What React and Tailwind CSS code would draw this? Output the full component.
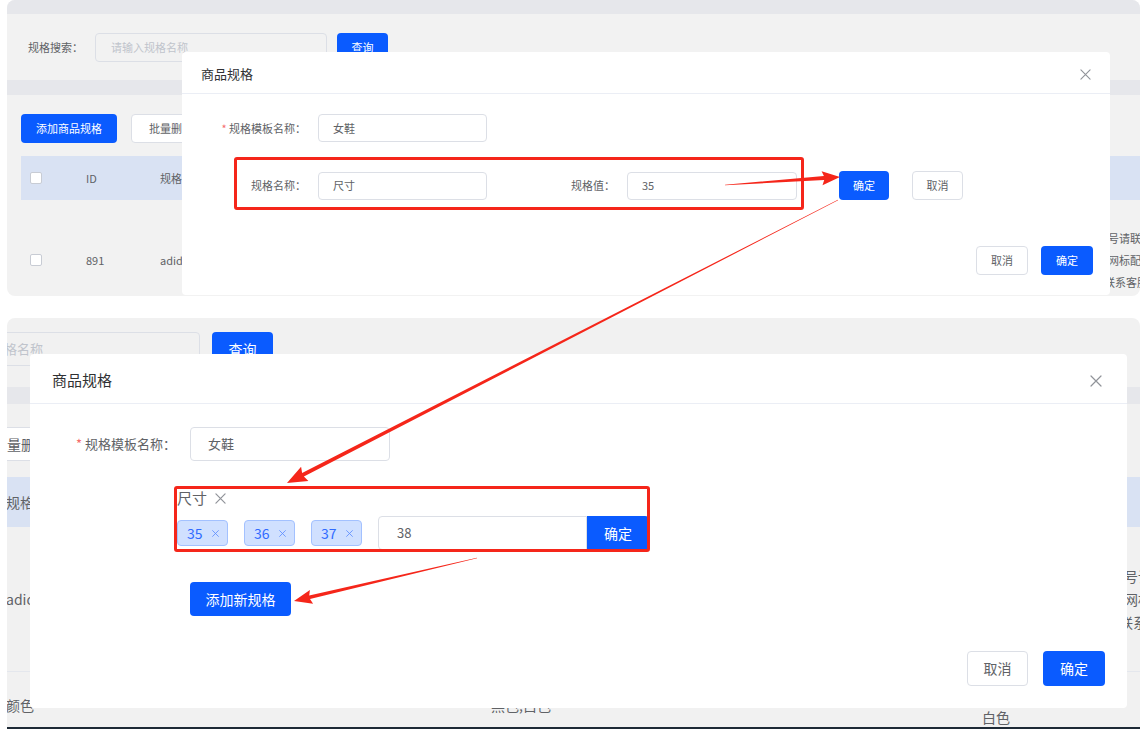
import React from 'react';

const XIcon = ({ size = 12, color = '#909399', width = 1.2 }) => (
  <svg width={size} height={size} viewBox="0 0 12 12" fill="none">
    <path d="M1 1L11 11M11 1L1 11" stroke={color} strokeWidth={width} strokeLinecap="round" />
  </svg>
);

// tapered annotation arrow: thin at the start, thick near the head
const Arrow = ({ from, to, w0 = 0.6, w1 = 4, head = 18, headW = 8 }) => {
  const [x0, y0] = from;
  const [x1, y1] = to;
  const len = Math.hypot(x1 - x0, y1 - y0);
  const ux = (x1 - x0) / len;
  const uy = (y1 - y0) / len;
  const nx = -uy;
  const ny = ux;
  const bx = x1 - ux * head;
  const by = y1 - uy * head;
  const pts = [
    [x0 + (nx * w0) / 2, y0 + (ny * w0) / 2],
    [bx + (nx * w1) / 2, by + (ny * w1) / 2],
    [bx + nx * headW - ux * 2, by + ny * headW - uy * 2],
    [x1, y1],
    [bx - nx * headW - ux * 2, by - ny * headW - uy * 2],
    [bx - (nx * w1) / 2, by - (ny * w1) / 2],
    [x0 - (nx * w0) / 2, y0 - (ny * w0) / 2],
  ];
  return <polygon points={pts.map((p) => p.map((v) => v.toFixed(1)).join(',')).join(' ')} fill="#f5261a" />;
};

const Checkbox = () => <div className="w-[12px] h-[12px] bg-white border border-[#c8ccd4] rounded-[2px]" />;

const TopShot = () => (
  <div className="relative h-[296px] rounded-lg overflow-hidden bg-[#f2f2f2] flex flex-col text-[11px]">
    <div className="h-[14px] shrink-0 bg-[#e6e7eb]" />
    {/* search card */}
    <div className="h-[66px] shrink-0 flex items-center pl-[21px]">
      <span className="w-[67px]">规格搜索：</span>
      <div className="w-[232px] h-[29px] border border-[#dcdfe6] rounded-[4px] flex items-center pl-[15px] text-[#c0c4cc]">
        请输入规格名称
      </div>
      <button className="ml-[10px] w-[51px] h-[29px] rounded-[4px] bg-[#0a5bff] text-white">查询</button>
    </div>
    <div className="h-[15px] shrink-0 bg-[#e6e7eb]" />
    {/* table card */}
    <div className="flex-1 pl-[14px] pt-[19px]">
      <div className="flex gap-[14px]">
        <button className="w-[96px] h-[29px] rounded-[4px] bg-[#0a5bff] text-white">添加商品规格</button>
        <button className="w-[80px] h-[29px] rounded-[4px] bg-white border border-[#dcdfe6]">批量删除</button>
      </div>
      <div className="mt-[13px] h-[44px] bg-[#d9e2f3] flex items-center">
        <div className="w-[65px] pl-[9px]"><Checkbox /></div>
        <div className="w-[74px]">ID</div>
        <div>规格名称</div>
      </div>
      <div className="h-[120px] flex items-center">
        <div className="w-[65px] pl-[9px]"><Checkbox /></div>
        <div className="w-[74px]">891</div>
        <div>adidas女鞋</div>
        <div className="ml-auto w-[43px] overflow-hidden whitespace-nowrap leading-[22px]">
          <div>帐号请联系客服</div>
          <div>官网标配</div>
          <div className="-ml-[4px]">请联系客服</div>
        </div>
      </div>
    </div>

    {/* modal */}
    <div className="absolute left-[175px] top-[52px] w-[928px] h-[243px] bg-white rounded-[4px] flex flex-col">
      <div className="h-[42px] shrink-0 border-b border-[#ebeef5] flex items-center justify-between px-[19px] pt-[3px]">
        <span className="text-[13px] text-[#303133]">商品规格</span>
        <XIcon size={11} />
      </div>
      <div className="mt-[20px] flex items-center">
        <div className="w-[124px] text-right"><span className="text-[#f56c6c]">* </span>规格模板名称：</div>
        <div className="ml-[12px] w-[169px] h-[28px] border border-[#dcdfe6] rounded-[4px] flex items-center pl-[14px]">女鞋</div>
      </div>
      <div className="mt-[29px] flex items-center">
        <div className="w-[124px] text-right">规格名称：</div>
        <div className="ml-[12px] w-[169px] h-[28px] border border-[#dcdfe6] rounded-[4px] flex items-center pl-[14px]">尺寸</div>
        <div className="w-[128px] text-right">规格值：</div>
        <div className="ml-[12px] w-[170px] h-[28px] border border-[#dcdfe6] rounded-[4px] flex items-center pl-[14px]">35</div>
        <button className="ml-[42px] w-[50px] h-[29px] rounded-[4px] bg-[#0a5bff] text-white">确定</button>
        <button className="ml-[23px] w-[51px] h-[29px] rounded-[4px] bg-white border border-[#dcdfe6]">取消</button>
      </div>
      <div className="mt-auto pb-[20px] pr-[17px] flex justify-end gap-[13px]">
        <button className="w-[52px] h-[29px] rounded-[4px] bg-white border border-[#dcdfe6]">取消</button>
        <button className="w-[52px] h-[29px] rounded-[4px] bg-[#0a5bff] text-white">确定</button>
      </div>
    </div>
  </div>
);

const Tag = ({ label }) => (
  <div className="w-[51px] h-[26px] rounded-[4px] bg-[#d0e0ff] border border-[#a3c1ff] flex items-center pl-[9px] gap-[9px] text-[14px] text-[#2f6bff]">
    <span>{label}</span>
    <XIcon size={7} color="#5b8cff" width={1.4} />
  </div>
);

const BottomShot = () => (
  <div className="relative h-[409px] rounded-t-lg overflow-hidden bg-[#f1f1f1] flex flex-col text-[13px]">
    {/* search card, scrolled left */}
    <div className="h-[69px] shrink-0 pt-[14px] flex items-start">
      <div className="-ml-[79px] shrink-0 w-[272px] h-[34px] border border-[#dcdfe6] rounded-[4px] flex items-center pl-[23px] text-[#c0c4cc]">
        请输入规格名称
      </div>
      <button className="ml-[12px] w-[61px] h-[34px] rounded-[4px] bg-[#0a5bff] text-white text-[14px]">查询</button>
    </div>
    <div className="h-[17px] shrink-0 bg-[#e6e7eb]" />
    <div className="flex-1 pt-[23px] text-[14px]">
      <button className="-ml-[22px] w-[76px] h-[34px] rounded-[4px] bg-white border border-[#dcdfe6] pl-[7px] text-left">批量删除</button>
      <div className="mt-[16px] h-[50px] bg-[#d9e2f3] flex items-center">
        <span className="-ml-px">规格名称</span>
      </div>
      <div className="h-[145px] flex items-center border-b border-[#e4e7ed]">
        <span className="-ml-px">adidas女鞋</span>
        <div className="ml-auto w-[30px] overflow-hidden whitespace-nowrap leading-[23px]">
          <div>帐号请联系客服</div>
          <div>官网标配</div>
          <div className="-ml-[5px]">请联系客服</div>
        </div>
      </div>
      <div className="flex pt-[23px] leading-[20px]">
        <div className="w-[485px] -ml-px">颜色</div>
        <div className="w-[491px]">黑色,白色</div>
        <div className="mt-[12px]">白色</div>
      </div>
    </div>

    {/* modal */}
    <div className="absolute left-[23px] top-[36px] w-[1097px] h-[354px] bg-white rounded-[4px] flex flex-col">
      <div className="h-[50px] shrink-0 border-b border-[#ebeef5] flex items-center justify-between pl-[22px] pr-[25px] pt-[4px]">
        <span className="text-[15px] text-[#303133]">商品规格</span>
        <XIcon size={12} />
      </div>
      <div className="mt-[23px] flex items-center">
        <div className="w-[146px] text-right"><span className="text-[#f56c6c]">* </span>规格模板名称：</div>
        <div className="ml-[14px] w-[200px] h-[34px] border border-[#dcdfe6] rounded-[4px] flex items-center pl-[17px]">女鞋</div>
      </div>
      <div className="ml-[147px] mt-[27px]">
        <div className="h-[20px] flex items-center gap-[8px]">
          <span className="text-[15px]">尺寸</span>
          <XIcon size={11} width={1.3} />
        </div>
        <div className="mt-[8px] h-[34px] flex items-center gap-[16px]">
          <Tag label="35" />
          <Tag label="36" />
          <Tag label="37" />
          <div className="flex">
            <div className="w-[209px] h-[34px] border border-[#dcdfe6] rounded-l-[4px] flex items-center pl-[18px]">38</div>
            <button className="w-[62px] h-[34px] rounded-r-[4px] bg-[#0a5bff] text-white text-[14px]">确定</button>
          </div>
        </div>
      </div>
      <button className="ml-[160px] mt-[32px] w-[101px] h-[34px] rounded-[4px] bg-[#0a5bff] text-white text-[14px]">添加新规格</button>
      <div className="mt-auto pb-[22px] pr-[22px] flex justify-end gap-[15px] text-[14px]">
        <button className="w-[61px] h-[35px] rounded-[4px] bg-white border border-[#dcdfe6]">取消</button>
        <button className="w-[62px] h-[35px] rounded-[4px] bg-[#0a5bff] text-white">确定</button>
      </div>
    </div>
  </div>
);

export default function App() {
  return (
    <div className="relative w-[1143px] h-[729px] overflow-hidden bg-white text-[#606266] font-['Noto_Sans_CJK_SC','Noto_Sans',sans-serif]">
      <div className="flex flex-col pl-[7px] pr-[3px]">
        <TopShot />
        <div className="h-[22px]" />
        <BottomShot />
        <div className="h-[2px] bg-[#1e2a36]" />
      </div>

      {/* annotation boxes */}
      <div className="absolute left-[234px] top-[157px] w-[570px] h-[53px] border-[3px] border-[#f5261a] rounded-[3px]" />
      <div className="absolute left-[174px] top-[486px] w-[476px] h-[66px] border-[3px] border-[#f5261a] rounded-[3px]" />

      {/* annotation arrows */}
      <svg className="absolute inset-0 pointer-events-none" width="1143" height="729">
        <Arrow from={[725, 185]} to={[840, 177]} w0={0.6} w1={4} head={16} headW={7} />
        <Arrow from={[838, 200]} to={[287, 483]} w0={0.4} w1={4} head={18} headW={8} />
        <Arrow from={[477, 558]} to={[294, 601]} w0={0.4} w1={3.5} head={16} headW={7} />
      </svg>
    </div>
  );
}
